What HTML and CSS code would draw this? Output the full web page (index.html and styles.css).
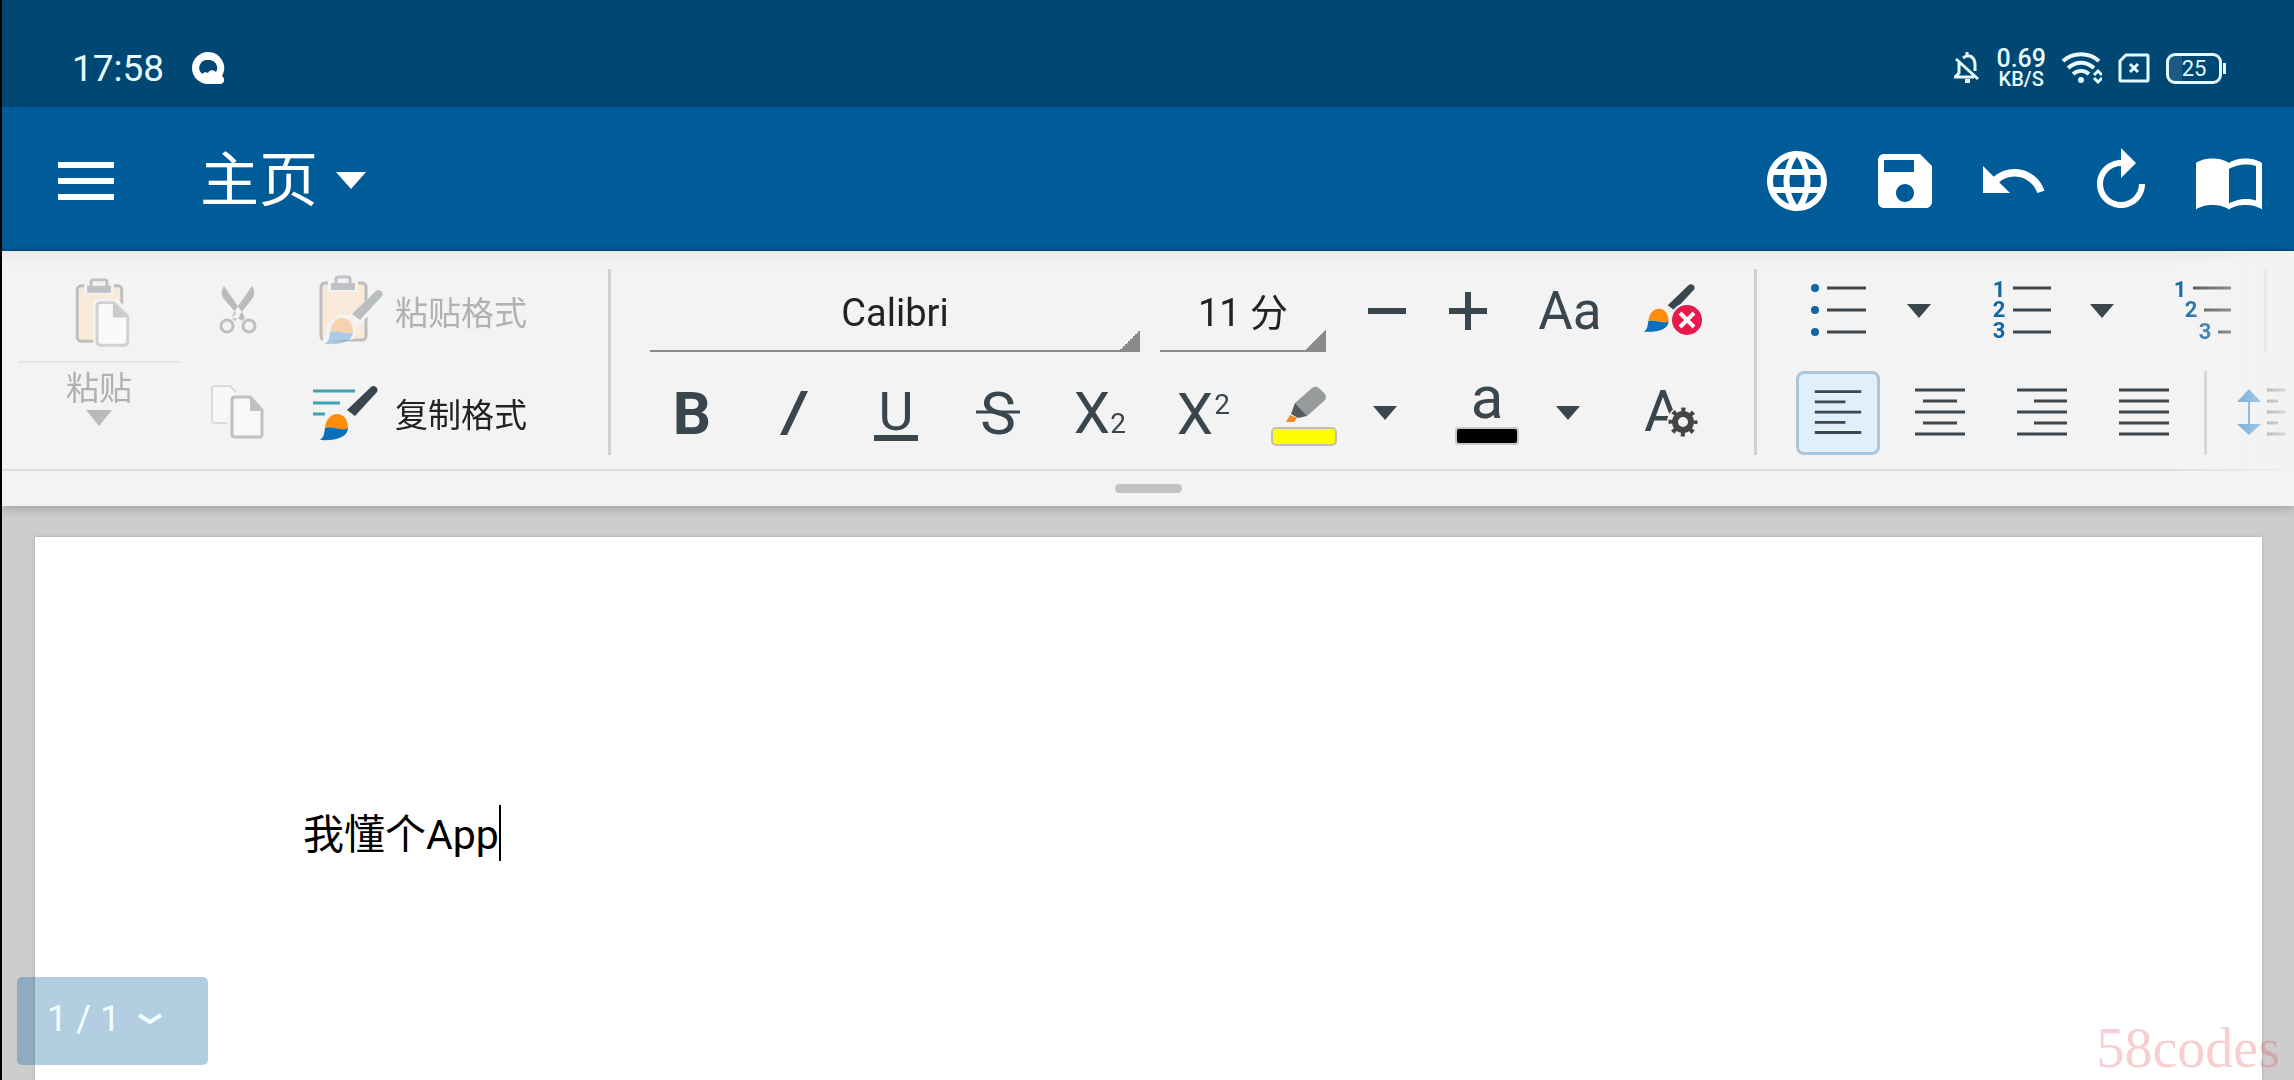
FILE: index.html
```html
<!DOCTYPE html>
<html lang="zh-CN">
<head>
    <meta charset="utf-8">
    <meta name="viewport" content="width=device-width, initial-scale=1">
    <title>主页</title>
    <link rel="stylesheet" href="styles.css">
</head>
<body>
    <!-- shared shapes -->
    <svg class="defs" aria-hidden="true">
        <symbol id="brush" viewBox="0 0 84 84">
            <path class="brush-handle" d="M36 39L60 16a4 4 0 0 1 6 5L44 45z"/>
            <path class="brush-paint" d="M14 57C15 48 20 43 26 43c7 0 11 6 11 14-6 4-16-3-23 0z"/>
            <path class="brush-tip" d="M14 57c7-3 17 4 23 0 0 9-12 13-28 12 5-4 4-8 5-12z"/>
        </symbol>
        <symbol id="board" viewBox="0 0 84 84">
            <rect class="board-fill" x="10" y="14" width="45" height="57" rx="4"/>
            <rect class="board-halo" x="17" y="3" width="30" height="20"/>
            <rect class="clip-ring" x="25" y="8" width="14" height="8" rx="2"/>
            <rect class="clip-base" x="20" y="14" width="24" height="7"/>
        </symbol>
    </svg>

    <header class="status-bar">
        <span class="clock">17:58</span>
        <svg class="status-app" viewBox="0 0 34 34">
            <path fill="#fff" fill-rule="evenodd" d="M17 1a16 16 0 0 1 14 24c4 3 2 8-2 8H17A16 16 0 0 1 17 1zm0 8a8 8 0 0 0-6 14c2-2 4-2 6-1 1-3 5-4 8-1A8 8 0 0 0 17 9z"/>
        </svg>
        <div class="status-right">
            <svg class="status-bell" viewBox="0 0 26 32" fill="none" stroke="#e6fbff" stroke-width="3">
                <path d="M2 7l22 20M5 11v10l-4 4h19M9 6c6-5 12-1 12 7v6M13 0v4"/>
                <path d="M11 29h5" stroke-width="4"/>
            </svg>
            <div class="speed"><b>0.69</b><span>KB/S</span></div>
            <svg class="status-wifi" viewBox="0 0 40 32" fill="none" stroke="#e6fbff" stroke-width="4">
                <path d="M1 9c10-9 26-9 36 0M6 16c8-7 18-7 26 0M11 22c5-4 11-4 16 0"/>
                <circle cx="19" cy="28" r="3" fill="#e6fbff" stroke="none"/>
                <path d="M32 23l4-4 4 4M32 26l4 4 4-4" stroke-width="3"/>
            </svg>
            <svg class="status-sim" viewBox="0 0 32 30" fill="none" stroke="#e6fbff" stroke-width="3">
                <path d="M8 2h21q1 0 1 1v24q0 1-1 1H3q-1 0-1-1V8z"/>
                <path d="M12 11l8 8M20 11l-8 8"/>
            </svg>
            <div class="battery">25</div>
        </div>
    </header>

    <nav class="app-bar">
        <button class="menu-button" aria-label="菜单">
            <svg class="menu-icon" viewBox="0 0 56 40"><path d="M0 4h56M0 20h56M0 36h56" stroke="#fff" stroke-width="6"/></svg>
        </button>
        <button class="tab-button">主页
            <svg class="tab-caret" viewBox="0 0 30 18"><path d="M0 0h30L15 17z" fill="#fff"/></svg>
        </button>
        <div class="actions">
            <button aria-label="网络">
                <svg viewBox="0 0 24 24"><path d="M11.99 2C6.47 2 2 6.48 2 12s4.47 10 9.99 10C17.52 22 22 17.52 22 12S17.52 2 11.99 2zm6.93 6h-2.95c-.32-1.25-.78-2.45-1.38-3.56 1.84.63 3.37 1.91 4.33 3.56zM12 4.04c.83 1.2 1.48 2.53 1.91 3.96h-3.82c.43-1.43 1.08-2.76 1.91-3.96zM4.26 14C4.1 13.36 4 12.69 4 12s.1-1.36.26-2h3.38c-.08.66-.14 1.32-.14 2 0 .68.06 1.34.14 2H4.26zm.82 2h2.95c.32 1.25.78 2.45 1.38 3.56-1.84-.63-3.37-1.9-4.33-3.56zm2.95-8H5.08c.96-1.66 2.49-2.93 4.33-3.56C8.81 5.55 8.35 6.75 8.03 8zM12 19.96c-.83-1.2-1.48-2.53-1.91-3.96h3.82c-.43 1.43-1.08 2.76-1.91 3.96zM14.34 14H9.66c-.09-.66-.16-1.32-.16-2 0-.68.07-1.35.16-2h4.68c.09.65.16 1.32.16 2 0 .68-.07 1.34-.16 2zm.25 5.56c.6-1.11 1.06-2.31 1.38-3.56h2.95c-.96 1.65-2.49 2.93-4.33 3.56zM16.36 14c.08-.66.14-1.32.14-2 0-.68-.06-1.34-.14-2h3.38c.16.64.26 1.31.26 2s-.1 1.36-.26 2h-3.38z"/></svg>
            </button>
            <button aria-label="保存">
                <svg viewBox="0 0 24 24"><path d="M17 3H5c-1.11 0-2 .9-2 2v14c0 1.1.89 2 2 2h14c1.1 0 2-.9 2-2V7l-4-4zm-5 16c-1.66 0-3-1.34-3-3s1.34-3 3-3 3 1.34 3 3-1.34 3-3 3zm3-10H5V5h10v4z"/></svg>
            </button>
            <button aria-label="撤销">
                <svg viewBox="0 0 24 24"><path d="M12.5 8c-2.65 0-5.05.99-6.9 2.6L2 7v9h9l-3.62-3.62c1.39-1.16 3.16-1.88 5.12-1.88 3.54 0 6.55 2.31 7.6 5.5l2.37-.78C21.08 11.03 17.15 8 12.5 8z"/></svg>
            </button>
            <button aria-label="重做">
                <svg viewBox="0 0 24 24"><path d="M12 5V1l5 5-5 5V7c-3.31 0-6 2.69-6 6s2.69 6 6 6 6-2.69 6-6h2c0 4.42-3.58 8-8 8s-8-3.58-8-8 3.58-8 8-8z"/></svg>
            </button>
            <button aria-label="阅读">
                <svg viewBox="0 0 24 24"><path fill-rule="evenodd" d="M1 6c1.45-1.1 3.55-1.5 5.5-1.5S10.55 4.9 12 6c1.45-1.1 3.55-1.5 5.5-1.5S21.55 4.9 23 6v15.5c-1.45-1.1-3.55-1.5-5.5-1.5s-4.05.4-5.5 1.5c-1.45-1.1-3.55-1.5-5.5-1.5S2.45 20.4 1 21.5zM21 18.5V7c-1.1-.35-2.3-.5-3.5-.5-1.7 0-4.15.65-5.5 1.5v11.5c1.35-.85 3.8-1.5 5.5-1.5 1.2 0 2.4.15 3.5.5z"/></svg>
            </button>
        </div>
    </nav>

    <section class="ribbon">
        <div class="groups">
            <div class="group clipboard">
                <button class="paste" disabled>
                    <svg class="paste-icon" viewBox="0 0 162 93">
                        <rect class="board-fill" x="59" y="17" width="45" height="56" rx="4"/>
                        <rect class="board-halo" x="66" y="6" width="30" height="20"/>
                        <rect class="clip-ring" x="73" y="11" width="16" height="8" rx="2"/>
                        <rect class="clip-base" x="69" y="17" width="24" height="7"/>
                        <path fill="#f3f3f3" d="M75 30h24l16 16v36H75z"/>
                        <path fill="#fafafa" stroke="#d0d1d2" stroke-width="3" d="M82 34h14l14 14v25q0 4-4 4H83q-4 0-4-4V38q0-4 4-4z"/>
                        <path fill="#c9cbcd" d="M95 34l15 15H95z"/>
                    </svg>
                    <span class="label">粘贴</span>
                    <svg class="paste-caret" viewBox="0 0 26 16"><path d="M0 0h26L13 16z" fill="#b8babc"/></svg>
                </button>
                <div class="column">
                    <button class="tool" disabled aria-label="剪切">
                        <svg viewBox="0 0 84 84">
                            <path fill="#b9bbbf" d="M28 17c-3 5-3 9 0 13l12 14-4 5 3 3 3-3 4 3 3-3-3-6zM56 17c3 5 3 9 0 13L45 44l-3 6-6-1 2-6z"/>
                            <g fill="none" stroke="#bdbfc1" stroke-width="3"><circle cx="31" cy="57" r="6"/><circle cx="53" cy="57" r="6"/></g>
                        </svg>
                    </button>
                    <button class="tool" disabled aria-label="复制">
                        <svg viewBox="0 0 84 84">
                            <path fill="#f7f7f7" stroke="#d9dadb" stroke-width="2" d="M31 52H19q-3 0-3-3V18q0-3 3-3h15l6 6"/>
                            <path fill="#f8f8f8" stroke="#bfc0c2" stroke-width="3" d="M39 26h15l12 13v24q0 3-3 3H39q-3 0-3-3V29q0-3 3-3z"/>
                            <path fill="#bfc0c2" d="M54 26l13 14H54z"/>
                        </svg>
                    </button>
                </div>
                <div class="column">
                    <button class="format" disabled>
                        <svg viewBox="0 0 84 84">
                            <use href="#board"/>
                            <path fill="#f3f3f3" d="M11 74l6-20 12-9 10 1 24-22 9 2-2 8-24 24-3 12z"/>
                            <use class="pale-brush" href="#brush" x="5" y="6" width="84" height="84"/>
                        </svg>
                        <span class="label">粘贴格式</span>
                    </button>
                    <button class="format">
                        <svg viewBox="0 0 84 84">
                            <path d="M2 20h42M2 32h27M2 43h12" stroke="#3da3b5" stroke-width="3"/>
                            <use href="#brush"/>
                        </svg>
                        <span class="label">复制格式</span>
                    </button>
                </div>
            </div>

            <div class="divider"></div>

            <div class="group column font">
                <div class="row wide">
                    <select class="font-name" aria-label="字体"><option>Calibri</option></select>
                    <select class="font-size" aria-label="字号"><option>11 分</option></select>
                    <div class="steps">
                        <button class="caret" aria-label="缩小"><svg class="step" viewBox="0 0 40 40"><path d="M1 20h38"/></svg></button>
                        <button class="caret" aria-label="放大"><svg class="step" viewBox="0 0 40 40"><path d="M1 20h38M20 1v38"/></svg></button>
                    </div>
                    <button class="tool change-case">Aa</button>
                    <button class="tool" aria-label="清除格式">
                        <svg viewBox="0 0 84 84">
                            <use href="#brush" transform="translate(4 2) scale(.88)"/>
                            <circle cx="55" cy="51" r="17" fill="#f3f3f3"/>
                            <circle cx="55" cy="51" r="15" fill="#e8194b"/>
                            <path d="M48 44l14 14M62 44L48 58" stroke="#fff" stroke-width="4"/>
                        </svg>
                    </button>
                </div>
                <div class="row">
                    <button class="tool bold">B</button>
                    <button class="tool" aria-label="倾斜">
                        <svg viewBox="0 0 84 84"><path fill="#3a464d" d="M49 20h7L35 64h-7z"/></svg>
                    </button>
                    <button class="tool">
                        <svg viewBox="0 0 84 84"><text x="42" y="59" font-size="54">U</text><path d="M20 67h44" stroke="#3a464d" stroke-width="6"/></svg>
                    </button>
                    <button class="tool">
                        <svg viewBox="0 0 84 84"><text x="42" y="63" font-size="60">S</text><path d="M20 41h44" stroke="#3a464d" stroke-width="3"/></svg>
                    </button>
                    <button class="tool">
                        <svg viewBox="0 0 84 84"><text x="34" y="62" font-size="58">X</text><text x="60" y="62" font-size="28">2</text></svg>
                    </button>
                    <button class="tool">
                        <svg viewBox="0 0 84 84"><text x="35" y="63" font-size="58">X</text><text x="62" y="43" font-size="28">2</text></svg>
                    </button>
                    <div class="split">
                        <button class="tool" aria-label="突出显示">
                            <svg viewBox="0 0 84 84">
                                <path fill="#969a9b" d="M33 32l17-15q4-3 8 1l4 4q4 4 0 8L45 45z"/>
                                <path fill="#545a5e" d="M33 32l12 13-9 2-7-4z"/>
                                <path fill="#f08a24" d="M28 44l7 3-3 4h-8z"/>
                                <rect x="10" y="57" width="64" height="17" rx="4" fill="#ff0" stroke="#c2c0b0" stroke-width="2"/>
                            </svg>
                        </button>
                        <button class="caret" aria-label="突出显示颜色"><svg viewBox="0 0 24 14"><path d="M0 0h24L12 14z"/></svg></button>
                    </div>
                    <div class="split">
                        <button class="tool">
                            <svg viewBox="0 0 84 84"><text x="42" y="47" font-size="60">a</text><rect x="11" y="57" width="62" height="16" rx="3" fill="#000" stroke="#c8c8c8" stroke-width="2"/></svg>
                        </button>
                        <button class="caret" aria-label="字体颜色"><svg viewBox="0 0 24 14"><path d="M0 0h24L12 14z"/></svg></button>
                    </div>
                    <button class="tool">
                        <svg viewBox="0 0 84 84">
                            <text x="35" y="60" font-size="58">A</text>
                            <circle cx="55" cy="51" r="16" fill="#f3f3f3"/>
                            <circle cx="55" cy="51" r="8" fill="none" stroke="#454545" stroke-width="6"/>
                            <circle cx="55" cy="51" r="12" fill="none" stroke="#454545" stroke-width="5" stroke-dasharray="4 5.42" stroke-dashoffset="2"/>
                        </svg>
                    </button>
                </div>
            </div>

            <div class="divider"></div>

            <div class="group column paragraph">
                <div class="row">
                    <div class="split">
                        <button class="tool" aria-label="项目符号">
                            <svg viewBox="0 0 84 84">
                                <g fill="#0f65a5"><circle cx="19" cy="19" r="4"/><circle cx="19" cy="41" r="4"/><circle cx="19" cy="63" r="4"/></g>
                                <path class="lines" d="M31 19h39M31 41h39M31 63h39"/>
                            </svg>
                        </button>
                        <button class="caret" aria-label="项目符号样式"><svg viewBox="0 0 24 14"><path d="M0 0h24L12 14z"/></svg></button>
                    </div>
                    <div class="split">
                        <button class="tool numbers">
                            <svg viewBox="0 0 84 84">
                                <text x="20" y="28">1</text><text x="20" y="48">2</text><text x="20" y="69">3</text>
                                <path class="lines" d="M34 19h38M34 41h38M34 63h38"/>
                            </svg>
                        </button>
                        <button class="caret" aria-label="编号样式"><svg viewBox="0 0 24 14"><path d="M0 0h24L12 14z"/></svg></button>
                    </div>
                    <button class="tool numbers">
                        <svg viewBox="0 0 84 84">
                            <text x="18" y="28">1</text><text x="29" y="48">2</text><text x="43" y="70">3</text>
                            <path class="lines" d="M31 19h38M42 41h27M56 63h13"/>
                        </svg>
                    </button>
                    <div class="divider"></div>
                </div>
                <div class="row">
                    <button class="tool selected" aria-label="左对齐"><svg viewBox="0 0 84 84"><path class="lines" d="M17 19h50M17 30h33M17 41h50M17 52h33M17 63h50"/></svg></button>
                    <button class="tool" aria-label="居中"><svg viewBox="0 0 84 84"><path class="lines" d="M17 19h50M25 30h34M17 41h50M25 52h34M17 63h50"/></svg></button>
                    <button class="tool" aria-label="右对齐"><svg viewBox="0 0 84 84"><path class="lines" d="M17 19h50M34 30h33M17 41h50M34 52h33M17 63h50"/></svg></button>
                    <button class="tool" aria-label="两端对齐"><svg viewBox="0 0 84 84"><path class="lines" d="M17 19h50M17 30h50M17 41h50M17 52h50M17 63h50"/></svg></button>
                    <div class="divider"></div>
                    <button class="tool" aria-label="行距">
                        <svg viewBox="0 0 84 84">
                            <path fill="#0f78c8" d="M24 18l12 13H25v22h11L24 64 12 53h11V31H12z"/>
                            <path class="lines" d="M42 19h19M42 30h11M42 41h19M42 52h11M42 63h19"/>
                        </svg>
                    </button>
                </div>
            </div>
        </div>
        <div class="grip"><span></span></div>
    </section>

    <main class="workspace">
        <article class="page">
            <div class="text" role="textbox" aria-label="正文" contenteditable="true">我懂个App</div>
        </article>
        <button class="page-count">1 / 1
            <svg viewBox="0 0 24 12"><path d="M1 2l11 7 11-7" fill="none" stroke="#f2ffff" stroke-width="4"/></svg>
        </button>
        <span class="watermark">58codes</span>
    </main>
</body>
</html>
```
FILE: styles.css
```css
* {
    box-sizing: border-box;
}

body {
    margin: 0;
    height: 100vh;
    display: flex;
    flex-direction: column;
    overflow: hidden;
    border-left: 2px solid #000;
    font-family: Roboto, 'Noto Sans CJK SC', sans-serif;
    background: #cdcdcd;
    color: #222;
}

button {
    display: flex;
    align-items: center;
    justify-content: center;
    padding: 0;
    border: none;
    background: transparent;
    color: inherit;
    font-family: inherit;
    flex-shrink: 0;
}

svg {
    display: block;
}

.defs {
    position: absolute;
    width: 0;
    height: 0;
}

/* Status bar */
.status-bar {
    display: flex;
    align-items: center;
    flex-shrink: 0;
    height: 107px;
    padding: 29px 68px 0 70px;
    background: #004773;
    color: #e6fbff;
}

.clock {
    font-size: 37px;
}

.status-app {
    width: 34px;
    height: 34px;
    margin-left: 27px;
}

.status-right {
    display: flex;
    align-items: center;
    gap: 16px;
    margin-left: auto;
}

.status-bell {
    width: 26px;
    height: 32px;
}

.speed {
    display: flex;
    flex-direction: column;
    align-items: center;
    font-size: 20px;
    font-weight: 500;
    line-height: 18px;
}

.speed b {
    font-size: 25px;
    font-weight: 500;
    line-height: 22px;
}

.status-wifi {
    width: 40px;
    height: 32px;
}

.status-sim {
    width: 32px;
    height: 30px;
}

.battery {
    position: relative;
    width: 56px;
    height: 31px;
    margin-right: 4px;
    border: 3px solid #e6fbff;
    border-radius: 9px;
    background: linear-gradient(90deg, #1d5a83 25%, transparent 25%);
    font-size: 22px;
    line-height: 26px;
    text-align: center;
}

.battery::after {
    content: "";
    position: absolute;
    top: 7px;
    right: -7px;
    width: 3px;
    height: 11px;
    background: #e6fbff;
}

/* App bar */
.app-bar {
    display: flex;
    align-items: center;
    flex-shrink: 0;
    height: 144px;
    padding: 6px 11px 0 56px;
    background: #005c99;
    border-bottom: 2px solid #08507f;
    color: #fff;
}

.menu-icon {
    width: 56px;
    height: 40px;
}

.tab-button {
    gap: 18px;
    margin-left: 86px;
    font-size: 59px;
    line-height: 72px;
}

.tab-caret {
    width: 30px;
    height: 18px;
}

.actions {
    display: flex;
    margin-left: auto;
}

.actions button {
    width: 108px;
}

.actions svg {
    width: 72px;
    height: 72px;
    fill: #fff;
}

/* Ribbon */
.ribbon {
    flex-shrink: 0;
    background: #f3f3f3;
    box-shadow: 0 2px 10px rgba(0, 0, 0, 0.25);
    z-index: 1;
}

.groups {
    display: flex;
    height: 220px;
    padding: 18px 0 14px 16px;
    overflow: hidden;
    background: linear-gradient(#e9e9e9, #f3f3f3 14px);
    border-bottom: 2px solid #dedede;
    -webkit-mask-image: linear-gradient(to left, rgba(0, 0, 0, 0.1), #000 120px);
    mask-image: linear-gradient(to left, rgba(0, 0, 0, 0.1), #000 120px);
}

.group {
    display: flex;
    flex-shrink: 0;
}

.column {
    display: flex;
    flex-direction: column;
    gap: 18px;
}

.row {
    display: flex;
    gap: 18px;
    height: 84px;
}

.wide {
    gap: 20px;
}

.split, .steps {
    display: flex;
}

.split {
    width: 165px;
}

.divider {
    flex-shrink: 0;
    width: 3px;
    background: #d0d0d0;
}

.groups > .divider {
    margin: 0 39px 0 38px;
}

.tool, .tool svg, .format svg {
    width: 84px;
    height: 84px;
}

.tool {
    color: #3a464d;
}

.tool text {
    fill: #3a464d;
    text-anchor: middle;
}

.clipboard {
    gap: 16px;
    width: 552px;
}

.paste {
    flex-direction: column;
    justify-content: flex-start;
    width: 162px;
    color: #b0b1b2;
    font-size: 33px;
}

.paste-icon {
    width: 162px;
    height: 94px;
    border-bottom: 2px solid #e6e6e6;
}

.label {
    padding-top: 4px;
    line-height: 43px;
}

.paste-caret {
    width: 26px;
    height: 16px;
}

.board-fill {
    fill: #f8e9d8;
    stroke: #bebec0;
    stroke-width: 3;
}

.board-halo {
    fill: #f3f3f3;
}

.clip-ring {
    fill: none;
    stroke: #c0c1c4;
    stroke-width: 3;
}

.clip-base {
    fill: #c0c1c4;
}

.format {
    padding-left: 15px;
    font-size: 33px;
}

.format:disabled {
    color: #b0b1b2;
}

.brush-handle {
    fill: #3a464d;
}

.brush-paint {
    fill: #ff8c0a;
}

.brush-tip {
    fill: #0a6fb8;
}

.pale-brush {
    opacity: 0.3;
}

.font-name, .font-size {
    appearance: none;
    height: 66px;
    margin-top: 17px;
    padding: 0 0 10px;
    border: none;
    border-bottom: 2px solid #8a8a8a;
    border-radius: 0;
    background: linear-gradient(135deg, transparent 50%, #8a8a8a 50%) right bottom / 20px 20px no-repeat;
    color: #222;
    font-family: inherit;
    font-size: 38px;
    text-align: center;
    text-align-last: center;
}

.font-name {
    width: 490px;
}

.font-size {
    width: 166px;
}

.caret {
    width: 78px;
    height: 84px;
}

.steps .caret {
    width: 81px;
}

.caret svg {
    width: 24px;
    height: 14px;
    fill: #3a464d;
}

.caret .step {
    width: 40px;
    height: 40px;
    fill: none;
    stroke: #3a464d;
    stroke-width: 6;
}

.change-case {
    font-size: 53px;
}

.bold {
    font-size: 60px;
    font-weight: 700;
}

.lines {
    stroke: #3f474c;
    stroke-width: 3;
}

.numbers text {
    fill: #12659e;
    font-size: 22px;
    font-weight: 700;
}

.selected {
    border: 3px solid #a9c6dc;
    border-radius: 8px;
    background: #e1effb;
}

.grip {
    display: flex;
    align-items: center;
    justify-content: center;
    height: 35px;
}

.grip span {
    width: 67px;
    height: 9px;
    border-radius: 5px;
    background: #c3c3c3;
}

/* Document */
.workspace {
    position: relative;
    display: flex;
    flex: 1;
    padding: 31px 32px 0 33px;
}

.page {
    flex: 1;
    padding: 268px 268px 0;
    background: #fff;
    box-shadow: 0 0 3px rgba(0, 0, 0, 0.2);
}

.text {
    width: max-content;
    padding-top: 4px;
    border-right: 2px solid #000;
    outline: none;
    color: #000;
    font-size: 41px;
    line-height: 52px;
}

.page-count {
    position: absolute;
    left: 15px;
    bottom: 15px;
    justify-content: flex-start;
    gap: 18px;
    width: 191px;
    height: 88px;
    padding: 0 0 4px 30px;
    border-radius: 5px;
    background: rgba(0, 92, 153, 0.3);
    color: #f2ffff;
    font-size: 36px;
}

.page-count svg {
    width: 24px;
    height: 12px;
}

.watermark {
    position: absolute;
    right: 14px;
    bottom: 0;
    color: rgba(225, 60, 70, 0.25);
    font-family: 'Liberation Serif', serif;
    font-size: 56px;
}
```
